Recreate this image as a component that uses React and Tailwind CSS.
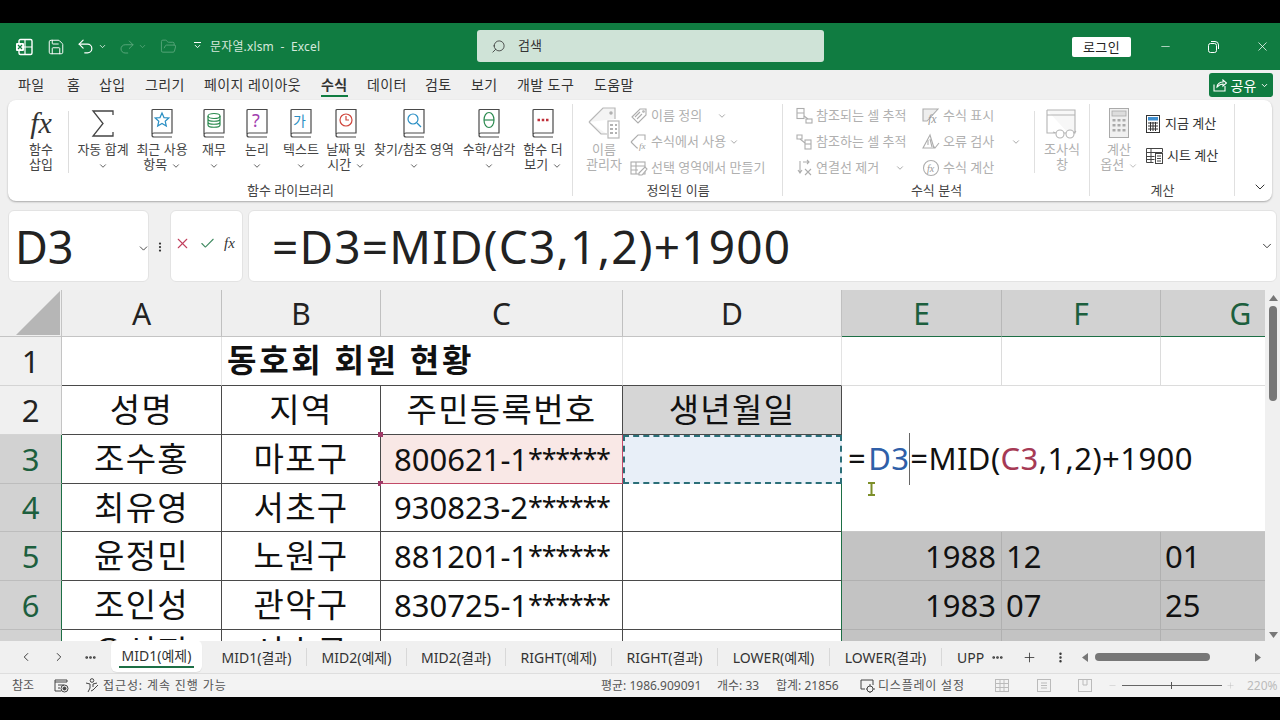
import {
  ChevronDown, ChevronLeft, ChevronRight, Check, X, Minus, Plus, Search, MoreHorizontal, MoreVertical,
  Undo2, Redo2, Save, FolderOpen,
} from "lucide-react";

const Chev = ({ className = "" }) => <ChevronDown size={10} strokeWidth={2} className={"inline-block shrink-0 " + className} />;

// book shaped icon of the function library
const Book = ({ children }) => (
  <svg width="24" height="31" viewBox="0 0 24 31" fill="none" stroke="#4a4a4a" strokeWidth="1.2">
    <path d="M2 26V2.5a1 1 0 0 1 1-1h19V25H4a2 2 0 0 0 0 4h18" />
    {children}
  </svg>
);

const Sigma = () => (
  <svg width="24" height="31" viewBox="0 0 24 31" fill="none" stroke="#444" strokeWidth="1.3">
    <path d="M22 7V3H2l10 12.5L2 28h20v-4" />
  </svg>
);

const Fx = ({ size = "text-[28px]" }) => <span className={"font-['Liberation_Serif',serif] italic text-[#333] leading-none " + size}>fx</span>;

const TagBig = () => (
  <svg width="34" height="34" viewBox="0 0 34 34" fill="none" stroke="#b8b8b8" strokeWidth="1.2">
    <path d="M2 16 16 2h12v11" fill="#f4f4f4" />
    <path d="M2 16l12 12h6" fill="#f4f4f4" />
    <circle cx="24" cy="7" r="1.2" fill="#999" />
    <rect x="21" y="15" width="11" height="17" fill="#fff" />
    <path d="M23 19h3M28 19h2M23 23h3M28 23h2M23 27h3M28 27h2" stroke="#999" strokeWidth="1.5" />
  </svg>
);

const Small = ({ children }) => (
  <svg width="18" height="18" viewBox="0 0 18 18" fill="none" stroke="#adadad" strokeWidth="1.1" className="shrink-0">{children}</svg>
);

const icons = {
  define: <Small><path d="M2 10 10 2h6v6l-8 8z" /><path d="M5 10l5-5M7 12l5-5" /><circle cx="13.5" cy="4.5" r=".8" /></Small>,
  use: <Small><path d="M1 9 8 2h7v5" /><path d="M1 9l6 6h1" /><text x="9" y="16" fontSize="9" fontStyle="italic" fontFamily="Liberation Serif" fill="#999" stroke="none">fx</text></Small>,
  make: <Small><rect x="1" y="3" width="14" height="12" /><path d="M1 7h14M1 11h7M6 3v12" /><path d="M9 14l6-6 2 2-5 6H9z" fill="#fff" /></Small>,
  prec: <Small><rect x="2" y="1.5" width="7" height="10" /><path d="M2 6h7M9 9l4 3" /><rect x="11" y="12" width="6" height="4" /></Small>,
  dep: <Small><path d="M2 2h5v4H2z" /><path d="M5 6l5 4" /><rect x="10" y="7" width="6" height="9" /><path d="M10 11h6" /></Small>,
  remove: <Small><path d="M5 2v11M3 11l2 3 2-3M8 3h6M12 1l2 2-2 2" /><path d="M10 10l6 6M16 10l-6 6" /></Small>,
  show: <Small><path d="M1 2h15L5 14H1z" fill="#eee" /><text x="6" y="16" fontSize="12" fontStyle="italic" fontFamily="Liberation Serif" fill="#999" stroke="none">fx</text></Small>,
  err: <Small><path d="M8 2 1 15h11z" /><path d="M6 7v5M8 6l2 8" /><path d="M11 13l2 2 4-5" /></Small>,
  evalf: <Small><circle cx="9" cy="9" r="7.5" /><text x="5" y="12.5" fontSize="10" fontStyle="italic" fontFamily="Liberation Serif" fill="#999" stroke="none">fx</text></Small>,
};

const Watch = () => (
  <svg width="32" height="32" viewBox="0 0 32 32" fill="none" stroke="#b4b4b4" strokeWidth="1.1">
    <path d="M1 3h28v23h-7" fill="#f7f7f7" /><path d="M1 3v23h8M1 8h28" />
    <circle cx="14" cy="27" r="4" fill="#fff" /><circle cx="24" cy="27" r="4" fill="#fff" /><path d="M18 26h2M10 26l-3-1M28 26l2-2" />
  </svg>
);

const Calc = () => (
  <svg width="20" height="30" viewBox="0 0 20 30" fill="#aaa" stroke="none">
    <rect x=".5" y=".5" width="19" height="29" fill="#f0f0f0" stroke="#aaa" />
    <rect x="3" y="3" width="14" height="5" fill="#ddd" stroke="#aaa" strokeWidth=".8" />
    {[11, 16, 21].map((y) => [3.5, 8.5, 13.5].map((x) => <rect key={x + "-" + y} x={x} y={y} width="3" height="2.5" />))}
  </svg>
);

const CalcNow = () => (
  <svg width="14" height="18" viewBox="0 0 14 18" fill="none" stroke="#333" className="shrink-0">
    <rect x=".5" y=".5" width="13" height="17" fill="#fff" />
    <rect x="2" y="2" width="10" height="3.5" fill="#3f8fd0" stroke="none" />
    <path d="M2 8h10M2 11h10M2 14h10M4.5 7v9M7 7v9M9.5 7v9" strokeWidth="1" />
  </svg>
);

const CalcSheet = () => (
  <svg width="18" height="18" viewBox="0 0 18 18" fill="none" stroke="#444" className="shrink-0">
    <path d="M.5 1.5h16V5M.5 1.5v14h7M.5 5.5h16M.5 9.5h8M.5 12.5h8M5 2v13" />
    <rect x="9.5" y="6.5" width="7" height="10" fill="#fff" />
    <path d="M11 9h4M11 11.5h4M11 14h4" />
  </svg>
);

const BigBtn = ({ w, icon, lines, disabled, className = "" }) => (
  <div className={"flex flex-col items-center shrink-0 pt-[7px] whitespace-nowrap text-[13px] leading-[15px] " + w + (disabled ? " text-[#b0b0b0] " : " text-[#444] ") + className}>
    <div className="h-[32px] flex items-center justify-center">{icon}</div>
    <div className="mt-[3px] text-center">{lines[0]}</div>
    <div className="text-center">{lines[1]}</div>
  </div>
);

const Row = ({ icon, label, chev }) => (
  <div className="flex items-center gap-[3px] text-[13px] text-[#b0b0b0] whitespace-nowrap h-[26px]">
    {icon}
    <span>{label}</span>
    {chev && <Chev className="text-[#999]" />}
  </div>
);

const Group = ({ w, label, children }) => (
  <div className={"relative flex flex-col shrink-0 " + w}>
    <div className="flex h-[81px]">{children}</div>
    <div className="h-[18px] leading-[18px] text-center text-[13px] text-[#444] whitespace-nowrap">{label}</div>
    <div className="absolute right-0 top-[4px] bottom-[5px] w-px bg-[#e0e0e0]" />
  </div>
);

const lib = [
  { w: "w-[62px]", icon: <Sigma />, lines: ["자동 합계", <Chev />] },
  { w: "w-[56px]", icon: <Book><path d="M12 5l2 4.6 4.8.4-3.6 3.2 1.1 4.8-4.3-2.5-4.3 2.5 1.1-4.8L5.2 10l4.8-.4z" stroke="#2a8fc4" /></Book>, lines: ["최근 사용", <span>항목 <Chev /></span>] },
  { w: "w-[48px]", icon: <Book><ellipse cx="12" cy="8" rx="6" ry="2.5" stroke="#2b8a4f" /><path d="M6 8v9c0 3 12 3 12 0V8M6 11c0 3 12 3 12 0M6 14c0 3 12 3 12 0" stroke="#2b8a4f" /></Book>, lines: ["재무", <Chev />] },
  { w: "w-[38px]", icon: <Book><text x="7" y="19" fontSize="18" fill="#a23fb0" stroke="none" fontFamily="Noto Sans">?</text></Book>, lines: ["논리", <Chev />] },
  { w: "w-[50px]", icon: <Book><text x="4" y="18" fontSize="14" fill="#2a8fc4" stroke="none" fontFamily="Noto Sans CJK KR">가</text></Book>, lines: ["텍스트", <Chev />] },
  { w: "w-[40px]", icon: <Book><circle cx="12" cy="12" r="6" stroke="#d0463c" /><path d="M12 8v4h3" stroke="#d0463c" /></Book>, lines: ["날짜 및", <span>시간 <Chev /></span>] },
  { w: "w-[96px]", icon: <Book><circle cx="11" cy="11" r="5" stroke="#2a8fc4" /><path d="M15 15l4 4" stroke="#2a8fc4" /></Book>, lines: ["찾기/참조 영역", <Chev />] },
  { w: "w-[54px]", icon: <Book><ellipse cx="12" cy="12" rx="5" ry="7.5" stroke="#2b8a4f" /><path d="M7 12h10" stroke="#2b8a4f" /></Book>, lines: ["수학/삼각", <Chev />] },
  { w: "w-[54px]", icon: <Book><path d="M6.5 12h2.500M10.750 12h2.500M15 12h2.500" stroke="#c0303a" strokeWidth="2.500" /></Book>, lines: ["함수 더", <span>보기 <Chev /></span>] },
];

const Ribbon = () => (
  <div className="h-[101px] mx-[8px] flex bg-white rounded-lg shadow-[0_1px_2px_rgba(0,0,0,0.3)] shrink-0">
    <Group w="w-[565px]" label="함수 라이브러리">
      <BigBtn w="w-[54px]" className="ml-[6px]" icon={<Fx size="text-[30px]" />} lines={["함수", "삽입"]} />
      <div className="w-px h-[62px] bg-[#ddd] mt-[11px] mr-[3px]" />
      {lib.map((b, i) => <BigBtn key={i} {...b} />)}
    </Group>
    <Group w="w-[210px]" label="정의된 이름">
      <BigBtn w="w-[56px]" className="ml-[3px]" disabled icon={<TagBig />} lines={["이름", "관리자"]} />
      <div className="pt-[3px] -ml-[2px]">
        <Row icon={icons.define} label={<>이름 정의<span className="inline-block w-[12px]" /></>} chev />
        <Row icon={icons.use} label="수식에서 사용" chev />
        <Row icon={icons.make} label="선택 영역에서 만들기" />
      </div>
    </Group>
    <Group w="w-[307px]" label="수식 분석">
      <div className="pt-[3px] ml-[12px] w-[127px] shrink-0">
        <Row icon={icons.prec} label="참조되는 셀 추적" />
        <Row icon={icons.dep} label="참조하는 셀 추적" />
        <Row icon={icons.remove} label={<>연결선 제거<span className="inline-block w-[13px]" /></>} chev />
      </div>
      <div className="pt-[3px] w-[112px] shrink-0">
        <Row icon={icons.show} label="수식 표시" />
        <Row icon={icons.err} label={<>오류 검사<span className="inline-block w-[14px]" /></>} chev />
        <Row icon={icons.evalf} label="수식 계산" />
      </div>
      <div className="w-px h-[62px] bg-[#e0e0e0] mt-[11px]" />
      <BigBtn w="w-[54px]" disabled icon={<Watch />} lines={["조사식", "창"]} />
    </Group>
    <Group w="w-[145px]" label="계산">
      <BigBtn w="w-[46px]" className="ml-[6px]" disabled icon={<Calc />} lines={["계산", <span>옵션 <Chev /></span>]} />
      <div className="pt-[8px] ml-[4px] text-[13px] text-[#333] whitespace-nowrap">
        <div className="h-[32px] flex items-center gap-[5px]"><CalcNow />지금 계산</div>
        <div className="h-[32px] flex items-center gap-[3px]"><CalcSheet />시트 계산</div>
      </div>
    </Group>
    <div className="flex-1 flex items-end justify-end pr-[4px] pb-[6px]"><ChevronDown size={16} className="text-[#333]" strokeWidth={1.5} /></div>
  </div>
);

const TitleBar = () => (
  <div className="h-[47px] shrink-0 bg-[#107c41] flex items-center text-white">
    <svg width="18" height="18" viewBox="0 0 18 18" className="ml-[15px] shrink-0">
      <rect x="4" y="1.5" width="13" height="15" rx="1.5" fill="none" stroke="#fff" strokeWidth="1.4" />
      <path d="M10 2v14M4 9h13" stroke="#fff" strokeWidth="1.2" />
      <rect x="1" y="5" width="8" height="8" rx="1" fill="#fff" />
      <path d="M3 7l4 4M7 7l-4 4" stroke="#107c41" strokeWidth="1.2" />
    </svg>
    <Save size={18} strokeWidth={1.3} className="ml-[14px]" />
    <Undo2 size={19} strokeWidth={1.5} className="ml-[11px]" />
    <ChevronDown size={9} strokeWidth={2} className="ml-[3px]" />
    <Redo2 size={18} strokeWidth={1.2} className="ml-[11px] text-[#5fa97f]" />
    <ChevronDown size={9} strokeWidth={2} className="ml-[2px] text-[#5fa97f]" />
    <FolderOpen size={17} strokeWidth={1.2} className="ml-[13px] text-[#5fa97f]" />
    <div className="ml-[16px] w-[9px] flex flex-col items-center">
      <div className="w-[7px] h-px bg-white mb-[1px]" />
      <ChevronDown size={9} strokeWidth={2.5} className="-mt-[2px]" />
    </div>
    <div className="ml-[8px] w-[267px] text-[12px] tracking-[0.15px] text-[#d5e8dc] whitespace-pre">문자열.xlsm  -  Excel</div>
    <div className="w-[347px] h-[32px] -mt-[1px] bg-[#cfe3d7] rounded-[3px] flex items-center text-[#333] text-[13px] shrink-0">
      <Search size={15} strokeWidth={1.3} className="ml-[14px] -scale-x-100" />
      <span className="ml-[12px]">검색</span>
    </div>
    <div className="ml-[248px] w-[59px] h-[20px] bg-white rounded-[2px] text-[#222] text-[13px] leading-[20px] text-center tracking-wide shrink-0">로그인</div>
    <Minus size={13} strokeWidth={1.2} className="ml-[28px]" />
    <svg width="11" height="12" viewBox="0 0 11 12" fill="none" stroke="#fff" className="ml-[36px]"><rect x=".5" y="2.5" width="8" height="9" rx="2" /><path d="M3 .5h4a3.5 3.5 0 0 1 3.5 3.5v4" /></svg>
    <X size={15} strokeWidth={1.2} className="ml-[36px]" />
  </div>
);

const tabs = [
  ["파일", "w-[49px]"], ["홈", "w-[32px]"], ["삽입", "w-[46px]"], ["그리기", "w-[59px]"], ["페이지 레이아웃", "w-[117px]"],
  ["수식", "w-[46px]"], ["데이터", "w-[58px]"], ["검토", "w-[46px]"], ["보기", "w-[46px]"], ["개발 도구", "w-[77px]"], ["도움말", "w-[60px]"],
];

const TabRow = () => (
  <div className="h-[30px] shrink-0 flex items-center pl-[18px] text-[14px] text-[#333] whitespace-nowrap">
    {tabs.map(([t, w]) => (
      <div key={t} className={"h-[30px] leading-[30px] shrink-0 " + w + (t === "수식" ? " font-semibold" : "")}>
        <span className="relative inline-block tracking-[0.4px]">
          {t}
          {t === "수식" && <span className="absolute left-0 right-0 top-[25px] h-[2px] bg-[#107c41]" />}
        </span>
      </div>
    ))}
    <div className="ml-auto mr-[7px] w-[64px] h-[24px] bg-[#107c41] rounded-[3px] text-white flex items-center justify-center gap-[4px] text-[14px]">
      <svg width="14" height="13" viewBox="0 0 14 13" fill="none" stroke="#fff" strokeWidth="1.1"><path d="M1 5.5V12h11V7M4 8c0-3 3-5 6-5V1l3.500 3L10 7V5c-2 0-4 1-6 3z" /></svg>
      공유
      <ChevronDown size={9} strokeWidth={2.5} />
    </div>
  </div>
);

const FormulaBar = () => (
  <div className="h-[72px] mt-[9px] shrink-0 flex text-[#222]">
    <div className="ml-[8px] w-[141px] bg-white rounded-md border border-[#e3e3e3] flex items-center pl-[6px] relative">
      <span className="text-[45px] leading-none">D3</span>
      <ChevronDown size={13} strokeWidth={1.5} className="absolute -right-[2px] top-[31px]" />
    </div>
    <MoreVertical size={12} strokeWidth={2.5} className="ml-[5px] mr-[4px] mt-[31px] text-[#333] shrink-0" />
    <div className="w-[73px] bg-white rounded-md border border-[#e3e3e3] flex items-center pl-[3px] gap-[8px] pb-[5px]">
      <X size={17} strokeWidth={1.5} className="text-[#c2405e]" />
      <Check size={17} strokeWidth={1.5} className="text-[#3f8a60]" />
      <Fx size="text-[15px]" />
    </div>
    <div className="ml-[5px] flex-1 mr-[3px] bg-white rounded-md border border-[#e3e3e3] flex items-center pl-[23px] relative">
      <span className="text-[46px] leading-none whitespace-nowrap tracking-[1.2px]">=D3=MID(C3,1,2)+1900</span>
      <ChevronDown size={14} strokeWidth={1.5} className="absolute right-[2px] top-[28px]" />
    </div>
  </div>
);

const line = "border-[#4a4a4a]";
const soft = "border-[#dcdcdc]";

const ColHead = ({ c, on }) => (
  <div className={"flex items-center justify-center text-[30px] border-r border-b " + (on ? "bg-[#d2d2d2] text-[#1d5f3e] border-r-[#b8b8b8] border-b-[#1d6f45]" : "bg-[#efefef] text-[#222] border-r-[#c0c0c0] border-b-[#c4c4c4]")}>{c}</div>
);

const RowHead = ({ n, on }) => (
  <div className={"flex items-center justify-center text-[31px] border-r border-b " + (on ? "bg-[#d2d2d2] text-[#1d5f3e] border-r-[#1d6f45] border-b-[#bdbdbd]" : "bg-[#f0f0f0] text-[#222] border-r-[#c4c4c4] border-b-[#d4d4d4]")}>{n}</div>
);

const Td = ({ children, className = "bg-white items-center" }) => (
  <div className={"flex justify-center text-[33px] tracking-[1.300px] whitespace-nowrap text-[#111] border-r border-b " + line + " " + className}>{children}</div>
);

const people = [
  [3, "조수홍", "마포구", "800621-1", "******"],
  [4, "최유영", "서초구", "930823-2", "******"],
  [5, "윤정민", "노원구", "881201-1", "******"],
  [6, "조인성", "관악구", "830725-1", "******"],
  [7, "오성진", "서초구", "790512-1", "******"],
];

const Handle = ({ className }) => <div className={"absolute w-[5px] h-[5px] bg-[#a03a68] " + className} />;

const Sheet = () => (
  <div className="h-[351px] shrink-0 flex">
    <div className="w-[1265px] overflow-hidden shrink-0">
      <div className="grid grid-cols-[62px_160px_159px_242px_219px_160px_159px_160px] grid-rows-[47px_49px_49px_49px_48px_49px_49px_49px] w-[1321px]">
        <div className="bg-[#efefef] border-r border-b border-[#c4c4c4] flex items-end justify-end pr-[1px] pb-[1px]">
          <svg width="44" height="44" viewBox="0 0 44 44"><polygon points="44,0 44,44 0,44" fill="#b6b6b6" /></svg>
        </div>
        {["A", "B", "C", "D"].map((c) => <ColHead key={c} c={c} />)}
        {["E", "F", "G"].map((c) => <ColHead key={c} c={c} on />)}

        <RowHead n={1} />
        <div className="bg-white border-r border-b border-r-[#e3e3e3] border-b-[#4a4a4a]" />
        <div className="col-span-2 bg-white border-r border-b border-r-[#e3e3e3] border-b-[#4a4a4a] flex items-center pl-[5px] pb-[2px] text-[32px] font-bold text-[#111] whitespace-nowrap tracking-[2.700px]">동호회 회원 현황</div>
        <div className="bg-white border-r border-b border-r-[#e3e3e3] border-b-[#4a4a4a]" />
        <div className={"bg-white border-r border-b " + soft} />
        <div className={"bg-white border-r border-b " + soft} />
        <div className={"bg-white border-b " + soft} />

        <RowHead n={2} />
        <Td>성명</Td>
        <Td>지역</Td>
        <Td>주민등록번호</Td>
        <Td className="bg-[#d6d6d6] items-center">생년월일</Td>
        <div className="col-span-3 row-span-3 bg-white relative flex items-center pl-[6px] text-[31px] tracking-[0.4px] text-[#111] whitespace-nowrap border-b border-[#c8c8c8]">
          =<span className="text-[#2f5fa8] ml-[2px]">D3</span>
          <span className="inline-block w-px h-[52px] bg-[#666]" />
          =MID(<span className="text-[#a63a55]">C3</span>,1,2)+1900
          <svg width="9" height="14" viewBox="0 0 9 14" fill="none" stroke="#7d8f2a" strokeWidth="2" className="absolute left-[25px] top-[96px]"><path d="M1 1h7M4.500 1v12M1 13h7" /></svg>
        </div>

        {people.map(([n, name, area, id, stars]) => (
          <div key={n} className="contents">
            <RowHead n={n} on />
            <Td className={"bg-white " + (n === 7 ? "items-start leading-[43px]" : "items-center")}>{name}</Td>
            <Td className={"bg-white " + (n === 7 ? "items-start leading-[43px]" : "items-center")}>{area}</Td>
            <div className={"flex items-center pl-[13px] relative text-[31px] whitespace-nowrap text-[#111] border-r border-b " + (n === 3 ? "bg-[#f9e8e6] border-[#c24a68]" : "bg-white " + line)}>
              {id}<span className="text-[27px] tracking-[-1.300px]">{stars}</span>
              {n === 3 && <><Handle className="-left-[3px] -top-[3px]" /><Handle className="-left-[3px] -bottom-[3px]" /></>}
            </div>
            {n === 3
              ? <div className="bg-[#e8eff8] border-2 border-dashed border-[#2b6f78]" />
              : <div className="bg-white border-b border-r border-b-[#4a4a4a] border-r-[#1d6f45]" />}
            {n > 4 && (
              <>
                <div className="bg-[#c3c3c3] border-r border-b border-[#b0b0b0] flex items-center justify-end pr-[5px] text-[31px] text-[#111]">{n === 5 ? "1988" : n === 6 ? "1983" : ""}</div>
                <div className="bg-[#c3c3c3] border-r border-b border-[#b0b0b0] flex items-center pl-[4px] text-[31px] text-[#111]">{n === 5 ? "12" : n === 6 ? "07" : ""}</div>
                <div className="bg-[#c3c3c3] border-b border-[#b0b0b0] flex items-center pl-[4px] text-[31px] text-[#111]">{n === 5 ? "01" : n === 6 ? "25" : ""}</div>
              </>
            )}
          </div>
        ))}
      </div>
    </div>
    <div className="flex-1 flex flex-col items-center pl-[1px] pt-[5px] pb-[3px] bg-[#f0f0f0]">
      <svg width="9" height="6" viewBox="0 0 9 6"><polygon points="4.500,0 9,6 0,6" fill="#777" /></svg>
      <div className="w-[8px] h-[95px] mt-[5px] bg-[#777] rounded-full" />
      <svg width="9" height="6" viewBox="0 0 9 6" className="mt-auto"><polygon points="0,0 9,0 4.500,6" fill="#777" /></svg>
    </div>
  </div>
);

const sheets = [
  ["MID1(결과)", "w-[100px] ml-[5px]"], ["MID2(예제)", "w-[100px]"], ["MID2(결과)", "w-[99px]"], ["RIGHT(예제)", "w-[106px]"],
  ["RIGHT(결과)", "w-[106px]"], ["LOWER(예제)", "w-[112px]"], ["LOWER(결과)", "w-[112px]"],
];

const SheetTabs = () => (
  <div className="relative z-10 h-[32px] shrink-0 flex items-center bg-[#f0f0f0] text-[14px] text-[#333] whitespace-nowrap">
    <ChevronLeft size={14} strokeWidth={1.6} className="ml-[19px]" />
    <ChevronRight size={14} strokeWidth={1.6} className="ml-[19px]" />
    <MoreHorizontal size={13} strokeWidth={3} className="ml-[18px]" />
    <div className="relative ml-[14px] w-[91px] h-[32px] -mt-[3px] bg-white rounded-md flex items-center justify-center shadow-[0_1px_1px_rgba(0,0,0,0.08)]">
      MID1(예제)
      <div className="absolute left-[8px] right-[8px] bottom-[4px] h-[2px] bg-[#1d6f45]" />
    </div>
    {sheets.map(([s, w]) => (
      <div key={s} className={"h-[18px] flex items-center justify-center border-r border-[#d8d8d8] shrink-0 " + w}>{s}</div>
    ))}
    <div className="ml-[15px] w-[28px] overflow-hidden shrink-0">UPP</div>
    <MoreHorizontal size={13} strokeWidth={3} className="ml-[6px]" />
    <Plus size={15} strokeWidth={1.3} className="ml-[18px]" />
    <MoreVertical size={13} strokeWidth={2.5} className="ml-[17px]" />
    <svg width="6" height="9" viewBox="0 0 6 9" className="ml-[15px]"><polygon points="6,0 6,9 0,4.500" fill="#777" /></svg>
    <div className="ml-[7px] w-[115px] h-[8px] bg-[#777] rounded-full" />
    <svg width="6" height="9" viewBox="0 0 6 9" className="ml-[45px]"><polygon points="0,0 0,9 6,4.500" fill="#777" /></svg>
  </div>
);

const StatusBar = () => (
  <div className="h-[24px] shrink-0 flex items-center text-[12px] text-[#555] whitespace-nowrap border-t border-[#dedede] bg-[#f3f3f3]">
    <span className="ml-[12px] w-[41px]">참조</span>
    <svg width="15" height="14" viewBox="0 0 15 14" fill="none" stroke="#444" className="ml-[1px]"><path d="M1 1h12v2H1zM1 3v9h6M4 6h6M4 9h2" /><circle cx="10.500" cy="9.500" r="3.500" /><circle cx="10.500" cy="9.500" r="1.500" fill="#444" /></svg>
    <svg width="14" height="15" viewBox="0 0 14 15" fill="none" stroke="#444" className="ml-[16px]"><circle cx="7" cy="2.500" r="1.800" /><path d="M1 5l4 1v4l-2 4M12 5l-4 1v3M6 13l2-1 5-5" /></svg>
    <span className="ml-[4px] w-[498px] tracking-[0.9px]">접근성: 계속 진행 가능</span>
    <span className="w-[116px]">평균: 1986.909091</span>
    <span className="w-[59px]">개수: 33</span>
    <span className="w-[84px]">합계: 21856</span>
    <svg width="15" height="14" viewBox="0 0 15 14" fill="none" stroke="#444"><path d="M5 10H1V1h12v5" /><circle cx="10" cy="10" r="3" /><path d="M10 5v2M10 13v1M6 10h1M13 10h2" /></svg>
    <span className="ml-[3px] w-[117px] tracking-[0.8px]">디스플레이 설정</span>
    <svg width="14" height="13" viewBox="0 0 14 13" fill="none" stroke="#bbb"><rect x=".5" y=".5" width="13" height="12" /><path d="M5 1v11M9 1v11M1 4.500h12M1 8.500h12" /></svg>
    <svg width="14" height="13" viewBox="0 0 14 13" fill="none" stroke="#bbb" className="ml-[28px]"><rect x=".5" y=".5" width="13" height="12" /><path d="M4 4h6M4 6.500h6M4 9h6" /></svg>
    <svg width="14" height="13" viewBox="0 0 14 13" fill="none" stroke="#bbb" className="ml-[27px]"><rect x=".5" y=".5" width="13" height="12" /><path d="M5 1v5h4V1" /></svg>
    <Minus size={9} strokeWidth={1.2} className="ml-[16px] text-[#bbb]" />
    <div className="ml-[5px] w-[100px] h-[1px] bg-[#666] relative">
      <div className="absolute left-[49px] -top-[3px] w-px h-[7px] bg-[#555]" />
    </div>
    <Plus size={9} strokeWidth={1.2} className="ml-[4px] text-[#bbb]" />
    <span className="ml-[12px] text-[#bbb]">220%</span>
  </div>
);

export default function App() {
  return (
    <div className="w-[1280px] h-[720px] bg-black pt-[23px] overflow-hidden font-['Noto_Sans','Noto_Sans_CJK_KR',sans-serif]">
      <div className="h-[674px] bg-[#f0f0f0] flex flex-col overflow-hidden">
        <TitleBar />
        <TabRow />
        <Ribbon />
        <FormulaBar />
        <div className="h-[8px] shrink-0" />
        <Sheet />
        <SheetTabs />
        <StatusBar />
      </div>
    </div>
  );
}
